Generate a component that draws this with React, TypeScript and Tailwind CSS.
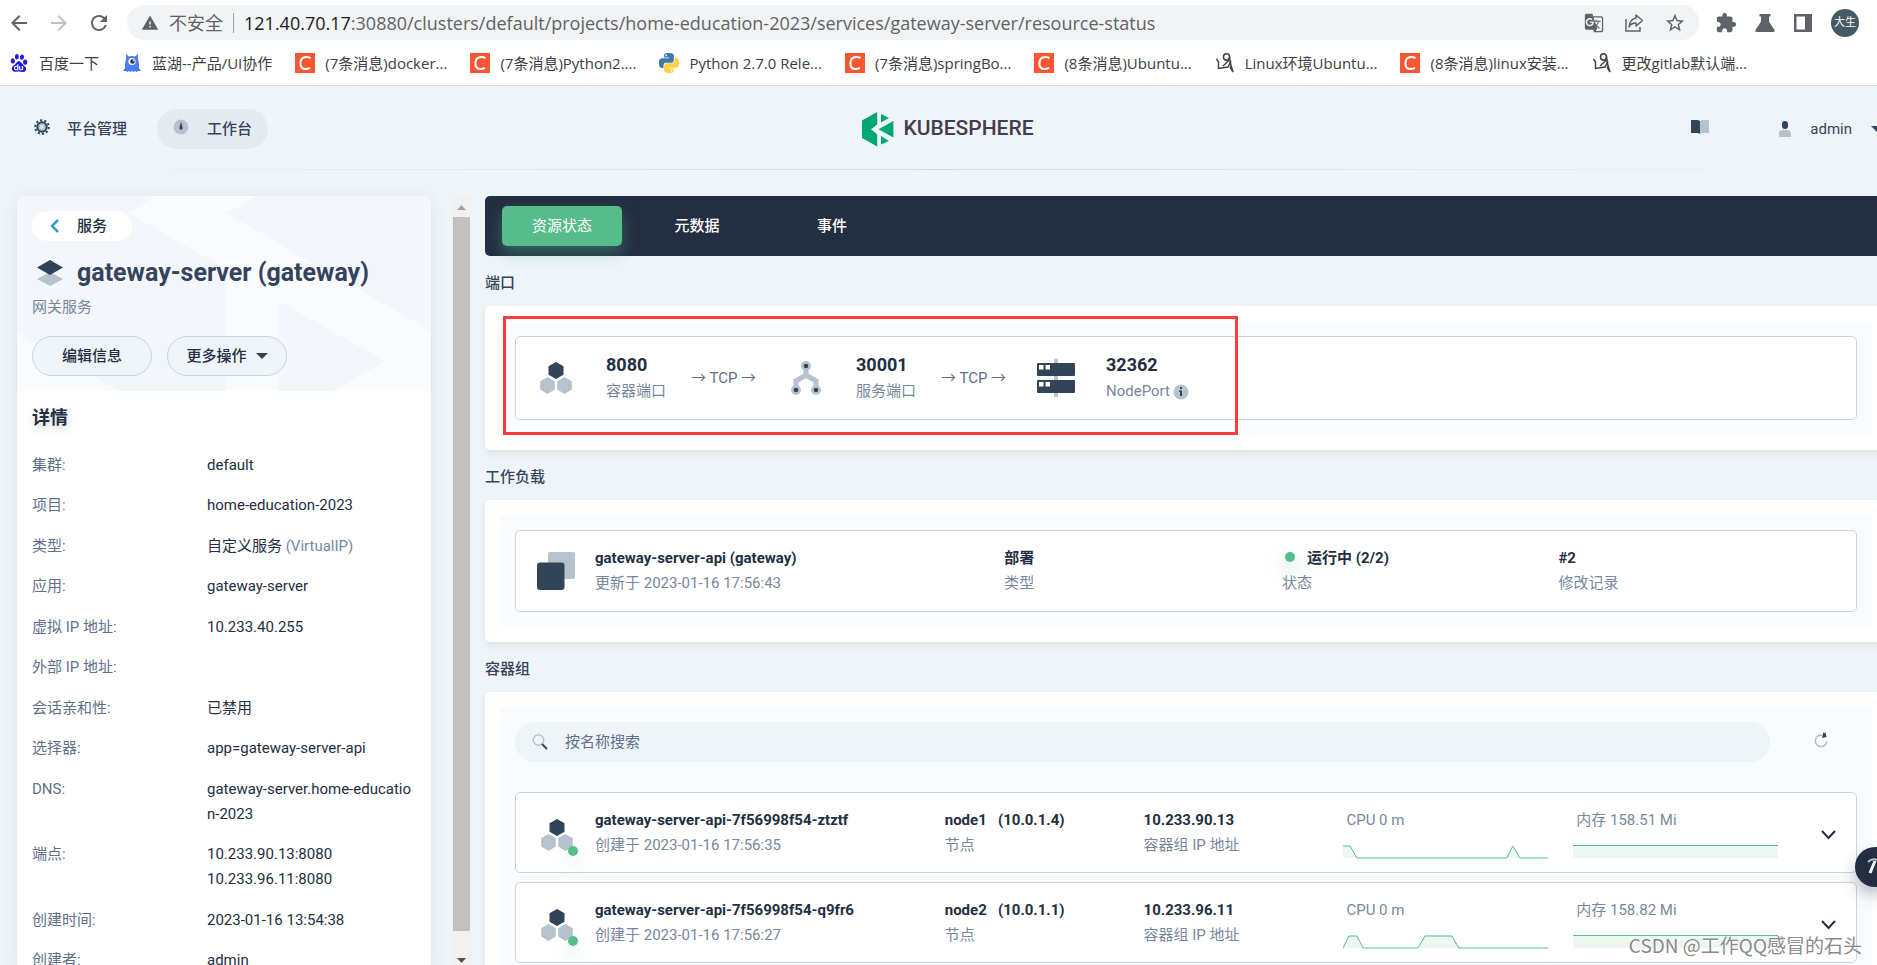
import React, { useState } from 'react';
import { MdArrowBack, MdArrowForward, MdRefresh, MdWarning, MdGTranslate, MdStarBorder, MdExtension } from 'react-icons/md';
import { SiBaidu } from 'react-icons/si';

interface Bookmark {
  icon: string;
  label: string;
}

interface Pod {
  name: string;
  created: string;
  node: string;
  nodeIp: string;
  ip: string;
  cpu: string;
  memory: string;
  points: string;
}

const bookmarks: Bookmark[] = [
  { icon: 'baidu', label: '百度一下' },
  { icon: 'lanhu', label: '蓝湖--产品/UI协作' },
  { icon: 'csdn', label: '(7条消息)docker...' },
  { icon: 'csdn', label: '(7条消息)Python2....' },
  { icon: 'python', label: 'Python 2.7.0 Rele...' },
  { icon: 'csdn', label: '(7条消息)springBo...' },
  { icon: 'csdn', label: '(8条消息)Ubuntu...' },
  { icon: 'note', label: 'Linux环境Ubuntu...' },
  { icon: 'csdn', label: '(8条消息)linux安装...' },
  { icon: 'note', label: '更改gitlab默认端...' },
];

const details: { label: string; value: React.ReactNode }[] = [
  { label: '集群', value: 'default' },
  { label: '项目', value: 'home-education-2023' },
  { label: '类型', value: <>自定义服务 <span className="text-[#79879c]">(VirtualIP)</span></> },
  { label: '应用', value: 'gateway-server' },
  { label: '虚拟 IP 地址', value: '10.233.40.255' },
  { label: '外部 IP 地址', value: '' },
  { label: '会话亲和性', value: '已禁用' },
  { label: '选择器', value: 'app=gateway-server-api' },
  { label: 'DNS', value: 'gateway-server.home-education-2023' },
  { label: '端点', value: <>10.233.90.13:8080<br />10.233.96.11:8080</> },
  { label: '创建时间', value: '2023-01-16 13:54:38' },
  { label: '创建者', value: 'admin' },
];

const pods: Pod[] = [
  {
    name: 'gateway-server-api-7f56998f54-ztztf',
    created: '2023-01-16 17:56:35',
    node: 'node1',
    nodeIp: '(10.0.1.4)',
    ip: '10.233.90.13',
    cpu: '0 m',
    memory: '158.51 Mi',
    points: '0,1 7,1 14,13 164,13 170,1 177,13 205,13',
  },
  {
    name: 'gateway-server-api-7f56998f54-q9fr6',
    created: '2023-01-16 17:56:27',
    node: 'node2',
    nodeIp: '(10.0.1.1)',
    ip: '10.233.96.11',
    cpu: '0 m',
    memory: '158.82 Mi',
    points: '0,13 6,1 14,1 20,13 75,13 82,1 109,1 116,13 205,13',
  },
];

const tabs = ['资源状态', '元数据', '事件'];

const PYTHON_PATH =
  'M14.25.18l.9.2.73.26.59.3.45.32.34.34.25.34.16.33.1.3.04.26.02.2-.01.13V8.5l-.05.63-.13.55-.21.46-.26.38-.3.31-.33.25-.35.19-.35.14-.33.1-.3.07-.26.04-.21.02H8.77l-.69.05-.59.14-.5.22-.41.27-.33.32-.27.35-.2.36-.15.37-.1.35-.07.32-.04.27-.02.21v3.06H3.17l-.21-.03-.28-.07-.32-.12-.35-.18-.36-.26-.36-.36-.35-.46-.32-.59-.28-.73-.21-.88-.14-1.05-.05-1.23.06-1.22.16-1.04.24-.87.32-.71.36-.57.4-.44.42-.33.42-.24.4-.16.36-.1.32-.05.24-.01h.16l.06.01h8.16v-.83H6.18l-.01-2.75-.02-.37.05-.34.11-.31.17-.28.25-.26.31-.23.38-.2.44-.18.51-.15.58-.12.64-.1.71-.06.77-.04.84-.02 1.27.05zm-6.3 1.98l-.23.33-.08.41.08.41.23.34.33.22.41.09.41-.09.33-.22.23-.34.08-.41-.08-.41-.23-.33-.33-.22-.41-.09-.41.09z';

function BookmarkIcon({ type }: { type: string }) {
  if (type === 'baidu') return <SiBaidu className="size-[18px] text-[#2319dc]" />;
  if (type === 'lanhu') {
    return (
      <svg viewBox="0 0 20 20" className="size-5">
        <path d="M4 1l3 2.500q3-1.200 6 0L16 1v6q1 2 1 5v3l2 3h-3l-1 1-2-1-1.500 1-1.500-1-1.500 1L7 18l-2 1-1-1H1l2-3v-3q0-3 1-5z" fill="#4a7cf7" />
        <circle cx="10" cy="8.500" r="3.600" fill="#fff" />
        <circle cx="10.500" cy="8.500" r="2.200" fill="#1c2a4a" />
        <circle cx="11.300" cy="7.800" r=".7" fill="#fff" />
      </svg>
    );
  }
  if (type === 'python') {
    return (
      <svg viewBox="0 0 24 24" className="size-5">
        <path d={PYTHON_PATH} fill="#3d7aab" />
        <path d={PYTHON_PATH} fill="#fdd23e" transform="rotate(180 12 12)" />
      </svg>
    );
  }
  if (type === 'note') {
    return (
      <svg viewBox="0 0 20 20" className="size-5" fill="none" stroke="#3f3f3f">
        <path d="M1.500 6L3.500 9v6.500l9.500-1.500 3-6" strokeWidth="1.400" />
        <ellipse cx="11.500" cy="4" rx="3" ry="3.200" strokeWidth="1.500" />
        <path d="M14.500 4q.5 7 3.500 15l-3-5.500" strokeWidth="1.600" />
        <path d="M14 7.500L8 13" strokeWidth="1.400" />
      </svg>
    );
  }
  return (
    <svg viewBox="0 0 20 20" className="size-5">
      <path d="M0 0h20v20H0z" fill="#fc5531" />
      <path d="M15.500 5.200q-2-1.300-4.500-1.200-5.200.2-5.600 6-.2 6 5 6 2.400 0 4.600-1.100" fill="none" stroke="#fff" strokeWidth="2" />
    </svg>
  );
}

function PodIcon() {
  return (
    <svg viewBox="0 0 32 32" className="size-8 shrink-0">
      <path d="M16 0l7.500 4.200v8.600L16 17l-7.500-4.200V4.200z" fill="#324558" />
      <path d="M7.500 15l7.300 4.200v8.400L7.500 32 .2 27.600v-8.400zM24.500 15l7.300 4.200v8.400L24.500 32l-7.300-4.400v-8.400z" fill="#b6c2cd" />
    </svg>
  );
}

function ServiceIcon() {
  return (
    <svg viewBox="0 0 30 34" className="h-[34px] w-[30px]">
      <path d="M15 5v8M5 29v-9l10-6 10 6v9" fill="none" stroke="#b6c2cd" strokeWidth="5" />
      <g fill="#b6c2cd">
        <circle cx="15" cy="5" r="5" />
        <circle cx="5" cy="29" r="5" />
        <circle cx="25" cy="29" r="5" />
      </g>
      <g fill="#324558">
        <circle cx="15" cy="5" r="2.300" />
        <circle cx="5" cy="29" r="2.300" />
        <circle cx="25" cy="29" r="2.300" />
      </g>
    </svg>
  );
}

function ServerIcon() {
  return (
    <svg viewBox="0 0 38 38" className="size-[38px]">
      <path d="M17 0h4v38h-4z" fill="#b6c2cd" />
      <rect y="4" width="38" height="13" rx="1" fill="#324558" />
      <rect y="21" width="38" height="13" rx="1" fill="#324558" />
      <path d="M2 6h4.500v4.500H2zM8.500 6H13v4.500H8.500zM2 23h4.500v4.500H2zM8.500 23H13v4.500H8.500z" fill="#fff" />
    </svg>
  );
}

function Caret() {
  return (
    <svg viewBox="0 0 12 6" className="h-[6px] w-3 shrink-0">
      <path d="M0 0h12L6 6z" fill="#324558" />
    </svg>
  );
}

function BrowserBar() {
  return (
    <div className="border-b border-[#d5d9dd] bg-white font-['Open_Sans','Noto_Sans_CJK_SC',sans-serif]">
      <div className="flex h-[45px] items-center pl-[7px] pr-[18px] text-[#5f6368]">
        <button aria-label="后退" className="mr-4"><MdArrowBack className="size-6" /></button>
        <button aria-label="前进" className="mr-4 text-[#bdc1c6]"><MdArrowForward className="size-6" /></button>
        <button aria-label="刷新" className="mr-4"><MdRefresh className="size-6" /></button>
        <div className="flex h-[35px] flex-1 items-center rounded-full bg-[#f1f3f4] pl-[14px] pr-[13px]">
          <MdWarning className="size-[18px]" />
          <span className="ml-[10px] text-lg">不安全</span>
          <span className="mx-[10px] h-5 w-px bg-[#9aa0a6]"></span>
          <span className="flex-1 whitespace-nowrap text-lg">
            <span className="text-[#202124]">121.40.70.17</span>:30880/clusters/default/projects/home-education-2023/services/gateway-server/resource-status
          </span>
          <button aria-label="翻译" className="mr-5"><MdGTranslate className="size-5" /></button>
          <button aria-label="分享" className="mr-5">
            <svg viewBox="0 0 20 20" className="size-5" fill="none" stroke="currentColor" strokeWidth="1.500">
              <path d="M2 6v12h14v-4" />
              <path d="M12 2l6.500 5.500L12 13V10q-5 0-7 4 .5-7.500 7-9z" strokeLinejoin="round" />
            </svg>
          </button>
          <button aria-label="收藏"><MdStarBorder className="size-[22px]" /></button>
        </div>
        <button aria-label="扩展程序" className="ml-4 mr-[18px]"><MdExtension className="size-[22px]" /></button>
        <button aria-label="实验" className="mr-[18px]">
          <svg viewBox="0 0 20 20" className="size-5" fill="currentColor">
            <path d="M4.500 1h11v2.500H14v5L19.500 17q.8 2-1.500 2H2q-2.300 0-1.500-2L6 8.500v-5H4.500z" />
          </svg>
        </button>
        <button aria-label="侧边栏" className="mr-[18px]">
          <svg viewBox="0 0 20 20" className="size-5">
            <path d="M1 1h18v18H1zm2.500 2.500v13H12v-13z" fill="currentColor" fillRule="evenodd" />
          </svg>
        </button>
        <button className="size-7 rounded-full bg-[#455a64] text-[11px] text-white">大生</button>
      </div>
      <nav className="flex h-10 items-center gap-[23px] pb-1 pl-[9px] text-[15px] text-[#3c4043]">
        {bookmarks.map((b, i) => (
          <a key={i} href="#" className="flex items-center gap-[10px] whitespace-nowrap">
            <span className="flex size-5 items-center justify-center"><BookmarkIcon type={b.icon} /></span>
            {b.label}
          </a>
        ))}
      </nav>
    </div>
  );
}

function Header() {
  return (
    <header>
      <div className="-mr-[6px] grid h-[83px] grid-cols-3 items-center pt-[3px] text-[#36435c]">
        <div className="flex items-center gap-2 pl-[15px] font-medium">
          <button className="flex h-10 items-center gap-[17px] rounded-full pl-[19px] pr-[22px]">
            <svg viewBox="0 0 16 16" className="mb-1 size-4">
              <circle cx="8" cy="8" r="6.800" fill="none" stroke="#324558" strokeWidth="2" strokeDasharray="2.200 2.070" />
              <circle cx="8" cy="8" r="4.700" fill="#b6c2cd" stroke="#324558" strokeWidth="2" />
              <circle cx="8" cy="8" r="2" fill="#dfe5ea" />
            </svg>
            平台管理
          </button>
          <button className="flex h-10 items-center gap-[18px] rounded-full bg-[#e5eaf1] px-4">
            <svg viewBox="0 0 16 16" className="mb-1 size-4">
              <circle cx="8" cy="8" r="7.500" fill="#b6c2cd" />
              <path d="M8 2.500l1.500 6a1.600 1.600 0 1 1-3 0z" fill="#324558" />
            </svg>
            工作台
          </button>
        </div>
        <a href="#" className="flex items-center justify-center gap-[9px] pl-[13px] font-[Roboto,sans-serif] text-[21px] font-medium text-[#443d4e]">
          <svg viewBox="0 0 32 35" className="h-[35px] w-8" fill="#00a971">
            <path d="M0 8.500L15.200 0v12.500L9 17.300l6.200 5v12.200L0 26zM19 2l8 4-8 4.500zM31.400 9v16.500l-14.900-8.200zM19 24l8 5-8 3.500z" />
          </svg>
          KUBESPHERE
        </a>
        <div className="flex items-center justify-end">
          <button aria-label="文档" className="mr-[70px]">
            <svg viewBox="0 0 18 14" className="mb-1 h-[14px] w-[18px]">
              <path d="M0 0h7l2 1v13l-2-1H0z" fill="#324558" />
              <path d="M18 0h-7L9 1v13l2-1h7z" fill="#b6c2cd" />
            </svg>
          </button>
          <button className="flex items-center gap-[19px]">
            <svg viewBox="0 0 12 16" className="h-4 w-3">
              <rect x="3" width="6" height="8" rx="3" fill="#324558" />
              <path d="M0 13q0-4 4-4h4q4 0 4 4v3H0z" fill="#b6c2cd" />
            </svg>
            admin
            <Caret />
          </button>
        </div>
      </div>
      <div className="h-px bg-linear-to-r from-transparent via-[#d5dce3] to-transparent"></div>
    </header>
  );
}

function Sidebar() {
  return (
    <aside className="ml-[17px] w-[414px] shrink-0 overflow-hidden rounded-t-[5px] bg-white shadow-[0_4px_16px_rgba(39,50,71,0.1)]">
      <div className="relative bg-[#f3f6fb] px-[15px] py-[15px]">
        <svg viewBox="0 0 414 195" className="absolute inset-0 size-full" fill="#fafbfd">
          <path d="M138 0h102l-31 17 205 118v60h-98l52-30-107-60v90h-52V73L111 17zM0 137l103 58H0z" />
        </svg>
        <div className="relative">
          <a href="#" className="flex h-[30px] w-[100px] items-center gap-[18px] rounded-full bg-white pl-[18px] font-medium">
            <svg viewBox="0 0 9 14" className="h-[14px] w-[9px]" fill="none" stroke="#329dce" strokeWidth="2.500">
              <path d="M8 1L2 7l6 6" />
            </svg>
            服务
          </a>
          <h1 className="mt-4 flex h-8 items-center gap-[13px] pl-1 text-[25px] font-bold text-[#36435c]">
            <svg viewBox="0 0 28 28" className="size-7">
              <path d="M14 13l13 7-13 7-13-7z" fill="#b6c2cd" />
              <path d="M14 1l13 7.500L14 16 1 8.500z" fill="#324558" />
            </svg>
            gateway-server (gateway)
          </h1>
          <p className="mt-[6px] leading-[25px] text-[#79879c]">网关服务</p>
          <div className="mt-4 flex gap-[15px] font-medium">
            <button className="h-10 w-[120px] rounded-full border border-[#ccd3db] bg-[#eff4f9]">编辑信息</button>
            <button className="flex h-10 w-[120px] items-center justify-center gap-[9px] rounded-full border border-[#ccd3db] bg-[#eff4f9]">
              更多操作
              <Caret />
            </button>
          </div>
        </div>
      </div>
      <div className="px-[15px] pt-[14px]">
        <h2 className="mb-[23px] text-lg font-bold leading-[25px] text-shadow-[0_4px_8px_rgba(36,46,66,0.2)]">详情</h2>
        <dl>
          {details.map((d) => (
            <div key={d.label} className="flex leading-[25px] odd:mb-[15px] even:mb-4">
              <dt className="w-[175px] shrink-0 text-[#5f708a]">{d.label}:</dt>
              <dd className="break-all">{d.value}</dd>
            </div>
          ))}
        </dl>
      </div>
    </aside>
  );
}

function ScrollBar() {
  return (
    <div className="ml-5 flex w-[21px] shrink-0 flex-col items-center bg-[#f1f1f1]">
      <svg viewBox="0 0 21 21" className="size-[21px]"><path d="M6 14l4.500-5 4.500 5z" fill="#a3a3a3" /></svg>
      <div className="w-[17px] flex-1 bg-[#c1c1c1]"></div>
      <div className="flex h-[34px] items-end">
        <svg viewBox="0 0 21 12" className="h-3 w-[21px]"><path d="M6 5l4.500 5L15 5z" fill="#505050" /></svg>
      </div>
    </div>
  );
}

function Section({ title, children }: { title: string; children: React.ReactNode }) {
  return (
    <section>
      <h3 className="h-[50px] pt-[15px] font-medium leading-[25px] text-[#36435c]">{title}</h3>
      <div className="rounded-[5px] bg-white p-[15px] shadow-[0_4px_8px_rgba(36,46,66,0.08)]">
        <div className="relative rounded-[5px] bg-[#f9fbfd] p-[15px]">{children}</div>
      </div>
    </section>
  );
}

function Cell({ title, sub }: { title: React.ReactNode; sub: string }) {
  return (
    <div className="whitespace-nowrap leading-[25px]">
      <div className="font-bold">{title}</div>
      <div className="text-[#79879c]">{sub}</div>
    </div>
  );
}

function PortBlock({ icon, port, label }: { icon: React.ReactNode; port: string; label: React.ReactNode }) {
  return (
    <div className="flex items-center gap-[25px]">
      <div className="flex w-[50px] justify-center">{icon}</div>
      <div className="w-[85px] whitespace-nowrap leading-[25px]">
        <div className="mb-[2px] text-lg font-bold leading-[25px]">{port}</div>
        <div className="flex items-center gap-[3px] text-[#79879c]">{label}</div>
      </div>
    </div>
  );
}

function PodRow({ pod }: { pod: Pod }) {
  return (
    <div className="flex h-[81px] items-center rounded-[5px] border border-[#ccd3db] bg-white pl-[25px]">
      <div className="relative mt-1 mr-[22px]">
        <PodIcon />
        <span className="absolute -right-[5px] -bottom-[5px] size-[10px] rounded-full bg-[#55bc8a] shadow-[0_8px_16px_rgba(85,188,138,0.3)]"></span>
      </div>
      <div className="grid flex-1 grid-cols-[350fr_199fr_200fr_230fr_230fr_53fr] items-center">
        <Cell title={pod.name} sub={`创建于 ${pod.created}`} />
        <Cell title={<>{pod.node}{'\u00a0\u00a0 '}{pod.nodeIp}</>} sub="节点" />
        <Cell title={pod.ip} sub="容器组 IP 地址" />
        <div className="pt-[2px] pr-[25px] text-[#79879c]">
          <p className="pl-[3px] leading-[25px]">CPU {pod.cpu}</p>
          <svg viewBox="0 0 205 14" preserveAspectRatio="none" className="mt-3 h-[14px] w-full">
            <polygon points={`0,13 ${pod.points} 205,13`} fill="#edf7f2" />
            <polyline points={pod.points} fill="none" stroke="#55bc8a" strokeWidth="1" />
          </svg>
        </div>
        <div className="pt-[2px] pr-[25px] text-[#79879c]">
          <p className="pl-[3px] leading-[25px]">内存 {pod.memory}</p>
          <div className="mt-3 mb-px h-[13px] border-t border-[#55bc8a] bg-[#edf7f2]"></div>
        </div>
        <button aria-label="展开" className="pt-1 pl-[18px]">
          <svg viewBox="0 0 15 10" className="h-[10px] w-[15px]" fill="none" stroke="#242e42" strokeWidth="2">
            <path d="M1 1l6.500 7L14 1" />
          </svg>
        </button>
      </div>
    </div>
  );
}

function ResourceStatus() {
  const [active, setActive] = useState(0);

  return (
    <main className="-mr-[10px] ml-[13px] min-w-0 flex-1">
      <div className="flex h-[60px] items-center gap-[15px] rounded-[5px] bg-[#242e42] px-[17px] text-white">
        {tabs.map((tab, i) => (
          <button
            key={tab}
            onClick={() => setActive(i)}
            className={
              i === active
                ? 'h-10 w-[120px] rounded-[5px] bg-[#55bc8a] shadow-[0_8px_16px_rgba(85,188,138,0.36)]'
                : 'h-10 w-[120px] rounded-[5px] font-medium'
            }
          >
            {tab}
          </button>
        ))}
      </div>

      <Section title="端口">
        <div className="flex h-[84px] items-center rounded-[5px] border border-[#ccd3db] bg-white pl-[15px]">
          <PortBlock icon={<PodIcon />} port="8080" label="容器端口" />
          <span className="w-[90px] text-[#5f708a]">→ TCP →</span>
          <PortBlock icon={<ServiceIcon />} port="30001" label="服务端口" />
          <span className="w-[90px] text-[#5f708a]">→ TCP →</span>
          <PortBlock
            icon={<ServerIcon />}
            port="32362"
            label={
              <>
                NodePort
                <svg viewBox="0 0 16 16" className="size-4">
                  <circle cx="8" cy="8" r="7.500" fill="#b6c2cd" />
                  <path d="M7 3h2v2H7zM6 6.500h3V12H7V8H6z" fill="#324558" />
                </svg>
              </>
            }
          />
        </div>
        {/* highlight over the port mapping */}
        <div className="absolute -top-[5px] left-[3px] h-[119px] w-[735px] border-3 border-[#ff3a3a]"></div>
      </Section>

      <Section title="工作负载">
        <div className="flex h-[82px] items-center rounded-[5px] border border-[#ccd3db] bg-white pl-[21px]">
          <svg viewBox="0 0 38 38" className="mr-5 size-[38px]">
            <rect x="11" width="27" height="27" rx="2" fill="#b6c2cd" />
            <rect y="10.500" width="27.500" height="27.500" rx="3" fill="#324558" />
          </svg>
          <div className="grid flex-1 grid-cols-[410fr_278fr_277fr_298fr]">
            <Cell title="gateway-server-api (gateway)" sub="更新于 2023-01-16 17:56:43" />
            <Cell title="部署" sub="类型" />
            <Cell
              title={
                <span className="flex items-center gap-3 pl-[3px]">
                  <i className="mb-1 size-[10px] rounded-full bg-[#55bc8a] shadow-[0_8px_16px_rgba(85,188,138,0.5)]"></i>
                  运行中 (2/2)
                </span>
              }
              sub="状态"
            />
            <Cell title="#2" sub="修改记录" />
          </div>
        </div>
      </Section>

      <Section title="容器组">
        <div className="mb-[30px] flex items-center">
          <label className="flex h-10 flex-1 items-center gap-[17px] rounded-full bg-[#eff4f9] pl-[17px]">
            <svg viewBox="0 0 16 16" className="size-4" fill="none">
              <circle cx="6.500" cy="6" r="5.200" stroke="#b6c2cd" strokeWidth="1.500" />
              <path d="M10 10l5 5" stroke="#324558" strokeWidth="1.800" />
            </svg>
            <input type="text" aria-label="按名称搜索" placeholder="按名称搜索" className="flex-1 bg-transparent outline-none placeholder:text-[#5f708a]" />
          </label>
          <button aria-label="刷新列表" className="pl-11 pr-[29px] pb-1">
            <svg viewBox="0 0 14 16" className="h-4 w-[14px]" fill="none">
              <path d="M8 3.200A5.700 5.700 0 1 0 12.700 9" stroke="#b6c2cd" strokeWidth="1.600" />
              <path d="M9.500 0l1 1.500L11.500 0l1 5-4.500 1z" fill="#324558" />
            </svg>
          </button>
        </div>
        <div className="flex flex-col gap-[9px]">
          {pods.map((pod) => <PodRow key={pod.name} pod={pod} />)}
        </div>
      </Section>
    </main>
  );
}

function App() {
  return (
    <div className="relative flex h-screen flex-col overflow-hidden bg-[#eff4f8] font-[Roboto,'Noto_Sans_CJK_SC',sans-serif] text-[15px] text-[#242e42]">
      <BrowserBar />
      <Header />
      <div className="flex min-h-0 flex-1 pt-[26px]">
        <Sidebar />
        <ScrollBar />
        <ResourceStatus />
      </div>
      <button aria-label="工具箱" className="absolute -right-[18px] bottom-[78px] flex size-10 items-center rounded-full bg-[#242e42] pl-3 shadow-[0_8px_16px_rgba(36,46,66,0.3)]">
        <svg viewBox="0 0 20 20" className="size-5" fill="none">
          <path d="M1 5q5-5 11-1" stroke="#b6c2cd" strokeWidth="2" />
          <path d="M8 4L3 16" stroke="#fff" strokeWidth="3" />
        </svg>
      </button>
      <div className="absolute right-[15px] bottom-[7px] font-['Noto_Sans_CJK_SC',sans-serif] text-[19px] leading-[26px] text-[#8a8a8a] text-shadow-[1px_1px_0_#fff]">CSDN @工作QQ感冒的石头</div>
    </div>
  );
}

export default App;
